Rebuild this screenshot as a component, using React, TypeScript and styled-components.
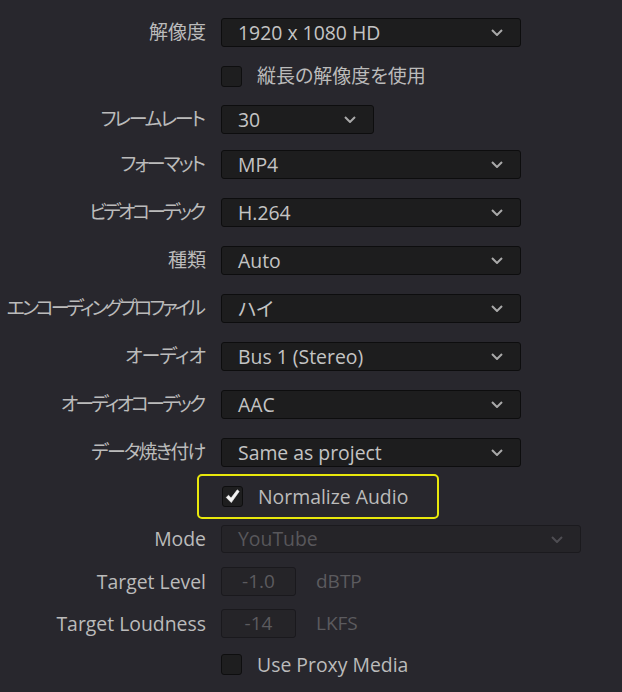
import React from 'react'
import styled, { createGlobalStyle } from 'styled-components'

const GlobalStyle = createGlobalStyle`
  html, body {
    margin: 0;
    padding: 0;
    background: #28272d;
  }
`

const Panel = styled.div`
  width: 622px;
  height: 692px;
  box-sizing: border-box;
  padding-top: 18px;
  display: flex;
  flex-direction: column;
  background: #28272d;
  overflow: hidden;
  font-family: "Open Sans", "Noto Sans CJK JP", sans-serif;
  font-size: 19px;
  line-height: 1;
  color: #bbbbbb;
  font-feature-settings: "palt";
`

const Row = styled.div<{ $mt?: number }>`
  display: flex;
  align-items: center;
  gap: 15px;
  margin-top: ${(p) => p.$mt ?? 0}px;
`

// kana labels are squeezed a little to match the narrow UI font of the original
const Label = styled.div<{ $tight?: number }>`
  width: 206px;
  flex: none;
  box-sizing: border-box;
  text-align: right;
  white-space: nowrap;
  letter-spacing: ${(p) => p.$tight ?? 0}px;
  padding-right: ${(p) => -(p.$tight ?? 0)}px;
  font-size: ${(p) => (p.$tight ? 19 : 19.4)}px;
`

const Select = styled.div<{ $w: number; $disabled?: boolean }>`
  width: ${(p) => p.$w}px;
  height: ${(p) => (p.$disabled ? 28 : 29)}px;
  box-sizing: border-box;
  display: flex;
  align-items: center;
  justify-content: space-between;
  padding: 0 17px 0 16px;
  background: ${(p) => (p.$disabled ? '#252428' : '#1d1d1e')};
  border: 1px solid ${(p) => (p.$disabled ? '#1b1a1e' : '#0d0d0e')};
  border-radius: 3px;
  color: ${(p) => (p.$disabled ? '#58575b' : '#c4c4c4')};
  font-size: 19.4px;
  white-space: nowrap;
`

const Chevron = styled.svg<{ $dim?: boolean }>`
  width: 12px;
  height: 7px;
  flex: none;
  stroke: ${(p) => (p.$dim ? '#4e4d52' : '#a9a9a9')};
`

const NumField = styled.div`
  width: 75px;
  height: 29px;
  box-sizing: border-box;
  display: flex;
  align-items: center;
  justify-content: center;
  background: #252428;
  border: 1px solid #1a191d;
  border-radius: 3px;
  color: #5c5b5f;
`

const Unit = styled.span`
  margin-left: 5px;
  color: #5c5b5f;
`

const Check = styled.div`
  width: 21px;
  height: 21px;
  box-sizing: border-box;
  flex: none;
  display: flex;
  align-items: center;
  justify-content: center;
  background: #1e1e1f;
  border: 1px solid #0e0e0f;
  border-radius: 3px;
`

const CheckRow = styled.div<{ $latin?: boolean }>`
  display: flex;
  align-items: center;
  gap: 15px;
  white-space: nowrap;
  font-size: ${(p) => (p.$latin ? 19.4 : 19)}px;
`

const Highlight = styled.div`
  margin-left: -24px;
  width: 242px;
  height: 45px;
  box-sizing: border-box;
  display: flex;
  align-items: center;
  padding-left: 23px;
  border: 2px solid #e8e80c;
  border-radius: 5px;
`

function Arrow({ dim }: { dim?: boolean }) {
  return (
    <Chevron $dim={dim} viewBox="0 0 12 7" fill="none" strokeWidth={2}>
      <polyline points="1,1 6,6 11,1" />
    </Chevron>
  )
}

function Dropdown({ value, w = 300, disabled }: { value: string; w?: number; disabled?: boolean }) {
  return (
    <Select $w={w} $disabled={disabled}>
      <span>{value}</span>
      <Arrow dim={disabled} />
    </Select>
  )
}

function CheckBox({ label, checked, latin }: { label: string; checked?: boolean; latin?: boolean }) {
  return (
    <CheckRow $latin={latin}>
      <Check>
        {checked && (
          <svg width="15" height="15" viewBox="0 0 15 15">
            <path d="M1.2 8.4 L3.6 6.2 L6 9.1 L12.3 0.8 L14.2 2.4 L6.3 13.6 Z" fill="#f4f4f4" stroke="#f4f4f4" strokeWidth={0.6} strokeLinejoin="round" />
          </svg>
        )}
      </Check>
      <span>{label}</span>
    </CheckRow>
  )
}

const settings = [
  { label: 'フォーマット', value: 'MP4', mt: 16, tight: -2.1 },
  { label: 'ビデオコーデック', value: 'H.264', mt: 19, tight: -3.2 },
  { label: '種類', value: 'Auto', mt: 19, tight: 0 },
  { label: 'エンコーディングプロファイル', value: 'ハイ', mt: 19, tight: -3.05 },
  { label: 'オーディオ', value: 'Bus 1 (Stereo)', mt: 19, tight: -1 },
  { label: 'オーディオコーデック', value: 'AAC', mt: 19, tight: -2.9 },
  { label: 'データ焼き付け', value: 'Same as project', mt: 19, tight: -1.9 },
]

export default function App() {
  return (
    <>
      <GlobalStyle />
      <Panel>
        <Row>
          <Label $tight={0.001}>解像度</Label>
          <Dropdown value="1920 x 1080 HD" />
        </Row>
        <Row $mt={19}>
          <Label />
          <CheckBox label="縦長の解像度を使用" />
        </Row>
        <Row $mt={18}>
          <Label $tight={-2.2}>フレームレート</Label>
          <Dropdown value="30" w={153} />
        </Row>
        {settings.map((s) => (
          <Row key={s.label} $mt={s.mt}>
            <Label $tight={s.tight || 0.001}>{s.label}</Label>
            <Dropdown value={s.value} />
          </Row>
        ))}
        <Row $mt={7}>
          <Label />
          <Highlight>
            <CheckBox label="Normalize Audio" checked latin />
          </Highlight>
        </Row>
        <Row $mt={6}>
          <Label>Mode</Label>
          <Dropdown value="YouTube" w={360} disabled />
        </Row>
        <Row $mt={14}>
          <Label>Target Level</Label>
          <NumField>-1.0</NumField>
          <Unit>dBTP</Unit>
        </Row>
        <Row $mt={13}>
          <Label>Target Loudness</Label>
          <NumField>-14</NumField>
          <Unit>LKFS</Unit>
        </Row>
        <Row $mt={16}>
          <Label />
          <CheckBox label="Use Proxy Media" latin />
        </Row>
      </Panel>
    </>
  )
}
